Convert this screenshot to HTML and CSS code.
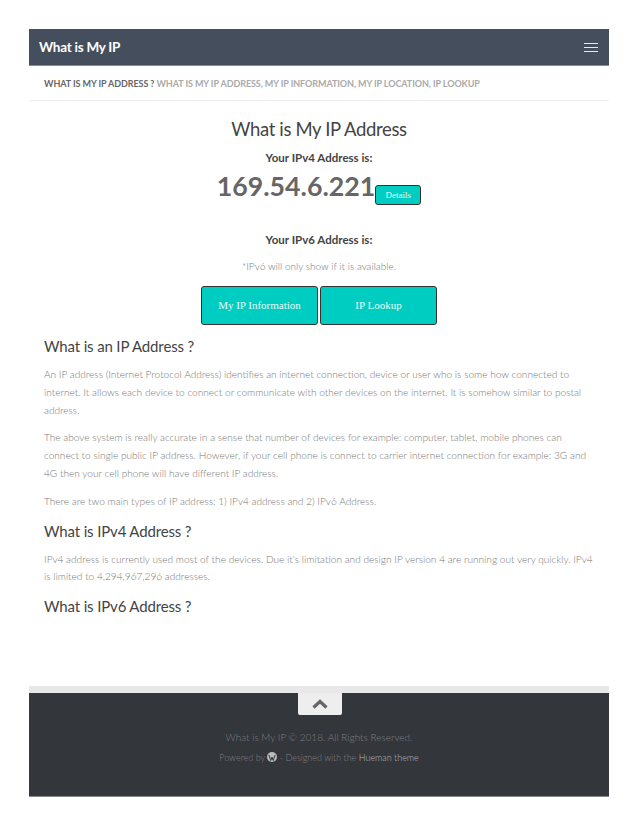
FILE: index.html
```html
<!DOCTYPE html>
<html lang="en">
  <head>
    <meta charset="UTF-8" />
    <title>What is My IP Address</title>
    <link rel="stylesheet" href="styles.css">
  </head>
  <body>
    <div class="wrapper">
      <div class="topbar">
        <span class="site-title">What is My IP</span>
        <span class="menu-toggle"><i></i><i></i><i></i></span>
      </div>
      <div class="subhead">
        <b>WHAT IS MY IP ADDRESS ?</b> WHAT IS MY IP ADDRESS, MY IP INFORMATION, MY IP LOCATION, IP LOOKUP
      </div>
      <div class="content">
        <div class="center">
          <h1>What is My IP Address</h1>
          <p class="label">Your IPv4 Address is:</p>
          <div class="ip-line">
            <span class="ip">169.54.6.221</span><a class="btn btn-small">Details</a>
          </div>
          <p class="label label-v6">Your IPv6 Address is:</p>
          <p class="note">*IPv6 will only show if it is available.</p>
          <div class="btn-row">
            <a class="btn btn-big">My IP Information</a>
            <a class="btn btn-big">IP Lookup</a>
          </div>
        </div>
        <h2>What is an IP Address ?</h2>
        <p>An IP address (Internet Protocol Address) identifies an internet connection, device or user who is some how connected to<br>internet. It allows each device to connect or communicate with other devices on the internet. It is somehow similar to postal<br>address.</p>
        <p>The above system is really accurate in a sense that number of devices for example: computer, tablet, mobile phones can<br>connect to single public IP address. However, if your cell phone is connect to carrier internet connection for example: 3G and<br>4G then your cell phone will have different IP address.</p>
        <p>There are two main types of IP address: 1) IPv4 address and 2) IPv6 Address.</p>
        <h2>What is IPv4 Address ?</h2>
        <p>IPv4 address is currently used most of the devices. Due it's limitation and design IP version 4 are running out very quickly. IPv4<br>is limited to 4,294,967,296 addresses.</p>
        <h2>What is IPv6 Address ?</h2>
      </div>
      <div class="footer">
        <a class="to-top">
          <svg width="16" height="10" viewBox="0 0 16 10"><path d="M1.500 8.500 8 2.500l6.500 6" fill="none" stroke="#666" stroke-width="3.200"/></svg>
        </a>
        <p class="copy">What is My IP © 2018. All Rights Reserved.</p>
        <p class="powered">Powered by
          <svg class="wp" width="10" height="10" viewBox="0 0 10 10"><circle cx="5" cy="5" r="5" fill="#bbb"/><path d="M1.800 3 3.800 8.500 5 5l1.200 3.500L8.200 3" fill="none" stroke="#33363b" stroke-width="1"/></svg>
          - Designed with the <a>Hueman theme</a></p>
      </div>
    </div>
  </body>
</html>
```

FILE: styles.css
```css
body {
  margin: 0;
  background-color: white;
  font-family: Lato, sans-serif;
  font-weight: 300;
  color: #777;
}
.wrapper {
  width: 580px;
  margin: 29px 0 0 29px;
}
.topbar {
  height: 37px;
  background-color: #454e5c;
  border-bottom: 1px solid #8b9098;
  display: flex;
  justify-content: space-between;
  align-items: center;
  padding: 0 11px 0 10px;
  box-sizing: border-box;
}
.site-title {
  color: white;
  font-weight: 700;
  font-size: 13.500px;
  letter-spacing: -0.25px;
}
.menu-toggle {
  display: flex;
  flex-direction: column;
  gap: 3px;
  width: 14px;
}
.menu-toggle i {
  height: 1px;
  background-color: #e6e8ea;
}
.subhead {
  height: 35px;
  line-height: 35px;
  padding-left: 15px;
  border-bottom: 1px solid #eee;
  box-sizing: border-box;
  font-size: 9px;
  font-weight: 700;
  letter-spacing: -0.08px;
  color: #aaa;
}
.subhead b {
  color: #666;
  font-weight: 700;
}
.content {
  padding: 0 15px;
  height: 585px;
  font-size: 10px;
}
.center {
  text-align: center;
}
h1 {
  margin: 0;
  padding-top: 15px;
  font-size: 18.500px;
  letter-spacing: -0.35px;
  line-height: 26px;
  font-weight: 400;
  color: #444;
}
.label {
  margin: 8px 0 0;
  font-size: 11.500px;
  line-height: 16px;
  font-weight: 700;
  color: #444;
}
.ip-line {
  margin-top: 2px;
  height: 36px;
  line-height: 36px;
}
.ip {
  font-weight: 700;
  font-size: 26.700px;
  color: #666;
}
.btn {
  display: inline-block;
  box-sizing: border-box;
  background-color: #00cdc1;
  border: 1px solid #333;
  border-radius: 3px;
  color: #e8fbfa;
  font-family: "Liberation Serif", serif;
  text-align: center;
}
.btn-small {
  width: 46px;
  height: 20px;
  line-height: 18px;
  font-size: 9px;
  vertical-align: -2px;
}
.label-v6 {
  margin-top: 28px;
}
.note {
  margin: 11px 0 0;
  font-size: 10px;
  line-height: 14px;
  color: #777;
}
.btn-row {
  margin-top: 13px;
  display: flex;
  justify-content: center;
  gap: 2px;
}
.btn-big {
  width: 117px;
  height: 39px;
  line-height: 37px;
  font-size: 11px;
}
h2 {
  margin: 1px 0 0;
  font-size: 15px;
  letter-spacing: -0.15px;
  line-height: 20px;
  font-weight: 400;
  color: #444;
}
.center + h2 {
  margin-top: 11px;
}
.content p:not([class]) {
  margin: 10px 0;
  font-size: 10.100px;
  line-height: 17.800px;
  color: #777;
}
.footer {
  position: relative;
  height: 111px;
  background-color: #33363b;
  border-top: 7px solid #e8e8e8;
  border-bottom: 1px solid #888;
  box-sizing: border-box;
  text-align: center;
  color: #7c7f83;
  font-size: 10px;
}
.to-top {
  position: absolute;
  top: 0;
  left: 269px;
  width: 44px;
  height: 22px;
  background-color: #eee;
  border-radius: 0 0 2px 2px;
  display: flex;
  align-items: center;
  justify-content: center;
}
.copy {
  margin: 0;
  padding-top: 37px;
  line-height: 14px;
}
.powered {
  margin: 7px 0 0;
  line-height: 14px;
  font-size: 9px;
}
.powered a {
  color: #bbb;
}
.wp {
  vertical-align: -1px;
}
```
